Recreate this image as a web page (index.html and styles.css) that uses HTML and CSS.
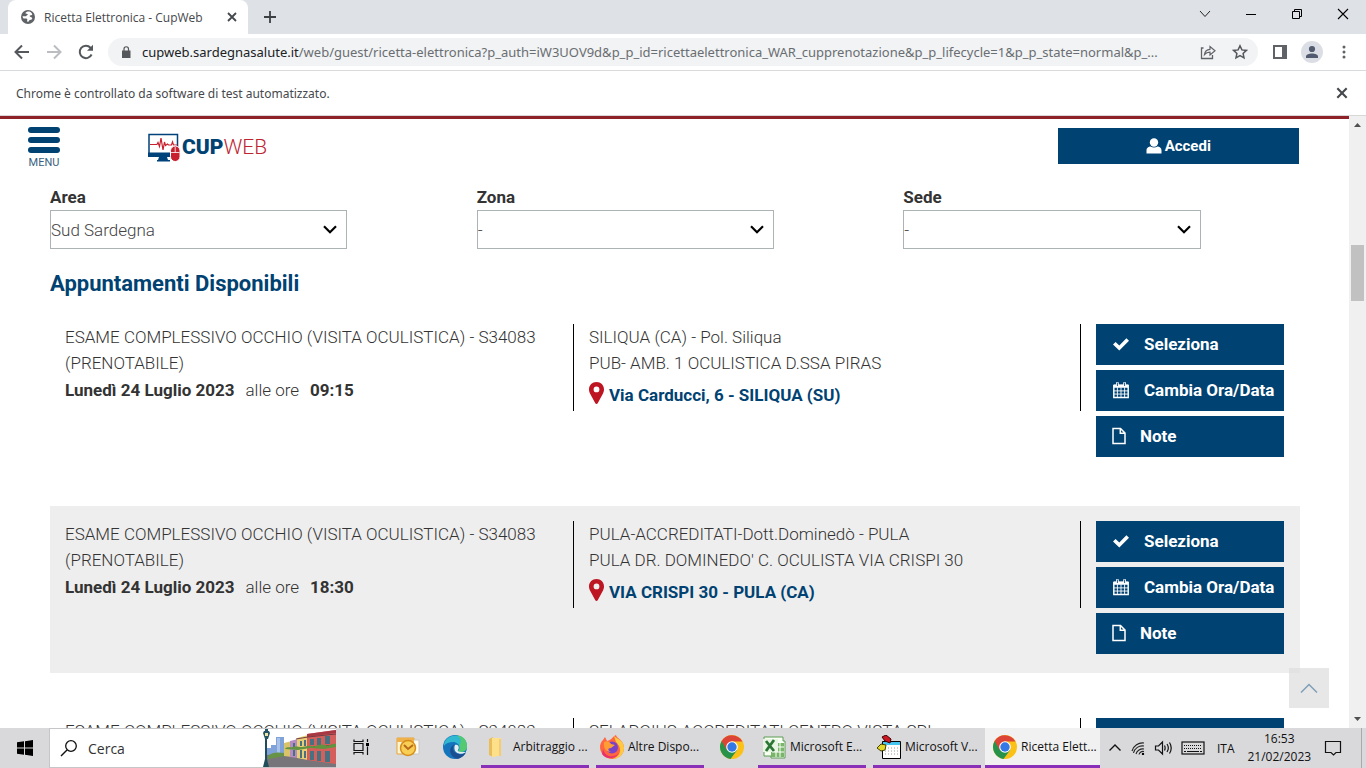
FILE: index.html
```html
<!DOCTYPE html>
<html lang="it">
<head>
<meta charset="utf-8">
<title>Ricetta Elettronica - CupWeb</title>
<link rel="stylesheet" href="styles.css">
</head>
<body>
<svg class="defs" aria-hidden="true">
  <symbol id="close" viewBox="0 0 12 12"><path d="M2 2l8 8M10 2l-8 8" stroke="currentColor" stroke-width="1.8" fill="none"/></symbol>
  <symbol id="check" viewBox="0 0 18 18"><path d="M1 9.600 3.600 7l3.700 3.600L14.400 3.200 17 5.800 7.300 15.500z" fill="#fff"/></symbol>
  <symbol id="calendar" viewBox="0 0 18 20"><path d="M1 5h16v13.300H1z" fill="none" stroke="#fff" stroke-width="1.600"/><path d="M1 4h16v3.500H1zM3.500 1.500h3v4h-3zM11.500 1.500h3v4h-3z" fill="#fff"/><path d="M1 11h16M1 14.500h16M5 7v11M9 7v11M13 7v11" stroke="#fff"/><path d="M5 2v3.500M13 2v3.500" stroke="#004272"/></symbol>
  <symbol id="file" viewBox="0 0 14 18"><path d="M1 1.500h7.500L13 6v10.500H1zM8.300 1.500V6.200H13" fill="none" stroke="#fff" stroke-width="1.500"/></symbol>
  <symbol id="pin" viewBox="0 0 15 22"><path fill-rule="evenodd" d="M7.500 0C3.200 0 0 3.200 0 7.400c0 1.600.4 2.600 1 4L6.300 21.200c.5 1 1.900 1 2.400 0L14 11.400c.6-1.400 1-2.400 1-4C15 3.200 11.800 0 7.500 0zm0 4.500a2.900 2.900 0 1 1 0 5.800 2.900 2.900 0 0 1 0-5.800z" fill="#bd1522"/></symbol>
  <symbol id="down" viewBox="0 0 14 9"><path d="M1 1.300l6 5.900 6-5.900" fill="none" stroke="#000" stroke-width="2.200"/></symbol>
  <symbol id="chrome" viewBox="0 0 24 24"><circle cx="12" cy="12" r="12" fill="#fbc116"/><path d="M12 12 1.600 6A12 12 0 0 0 10.500 23.900L17.200 15z" fill="#27934a"/><path d="M1.600 6A12 12 0 0 1 22.400 6.500H12L6.800 15z" fill="#dc4437"/><circle cx="12" cy="12" r="5.800" fill="#fff"/><circle cx="12" cy="12" r="4.700" fill="#3478e5"/></symbol>
</svg>

<div class="tabstrip">
  <div class="tab">
    <svg class="i14" viewBox="0 0 14 14"><circle cx="7" cy="7" r="7" fill="#5f6368"/><path d="M8.500 1.600C6.500 1.300 5 2 4.300 3.300c.8.700 2 .3 2.500 1 .2 1-1.300.9-1.600 1.900-1 .5-2.500-.3-3.700.1.100 1 .5 1.600 1 2.200 1.300.2 2.700-.4 3.600.4.600.8-.3 1.600.2 2.900 1.200.3 1.700-.7 2-1.500.8-.7 2.300-.4 2.900-1.600.3-1.200-1-1.800-2-2-1.100-.4-.3-1.300.6-1.400.9.200 1.300-.3 1.500-.8C10.600 3 9.700 2 8.500 1.600z" fill="#fff"/></svg>
    <span class="tab-title">Ricetta Elettronica - CupWeb</span>
    <button class="icon-btn" aria-label="Chiudi scheda"><svg class="i12"><use href="#close"/></svg></button>
  </div>
  <button class="icon-btn new-tab" aria-label="Nuova scheda"><svg class="i12" viewBox="0 0 12 12"><path d="M6 0v12M0 6h12" stroke="#3c4043" stroke-width="1.800"/></svg></button>
  <div class="window-controls">
    <button class="icon-btn" aria-label="Cerca schede"><svg class="i12" viewBox="0 0 12 12"><path d="M1 3l5 5.500L11 3" fill="none" stroke="#222"/></svg></button>
    <button class="icon-btn" aria-label="Riduci a icona"><svg class="i12" viewBox="0 0 12 12"><path d="M1 6.500h10" stroke="#000"/></svg></button>
    <button class="icon-btn" aria-label="Ripristina"><svg class="i12" viewBox="0 0 12 12"><path d="M1.500 3.500h7v7h-7zM3.500 3.500v-2h7v7h-2" fill="none" stroke="#000"/></svg></button>
    <button class="icon-btn" aria-label="Chiudi"><svg class="i12" viewBox="0 0 12 12"><path d="M1 1l10 10M11 1L1 11" stroke="#000" stroke-width="1.100"/></svg></button>
  </div>
</div>

<div class="toolbar">
  <button class="icon-btn" aria-label="Indietro"><svg class="i16" viewBox="0 0 16 16"><path d="M15 8H2M8 1.500L1.500 8 8 14.500" fill="none" stroke="#54575b" stroke-width="2"/></svg></button>
  <button class="icon-btn" aria-label="Avanti"><svg class="i16" viewBox="0 0 16 16"><path d="M1 8h13M8 1.500L14.500 8 8 14.500" fill="none" stroke="#bbbdc0" stroke-width="2"/></svg></button>
  <button class="icon-btn" aria-label="Ricarica"><svg class="i16" viewBox="0 0 16 16"><path d="M13.600 10.500A6.200 6.200 0 1 1 12.500 3.700L14 5.300" fill="none" stroke="#54575b" stroke-width="2"/><path d="M15 .8v6H9z" fill="#54575b"/></svg></button>
  <div class="address">
    <svg class="i12" viewBox="0 0 12 12"><path d="M4 5V3a2.200 2.200 0 0 1 4.500 0v2" fill="none" stroke="#54575b" stroke-width="1.200"/><path d="M2 4.500h8.500V12H2z" fill="#54575b"/></svg>
    <div class="url" role="textbox" aria-label="Indirizzo" contenteditable="true" spellcheck="false"><b>cupweb.sardegnasalute.it</b>/web/guest/ricetta-elettronica?p_auth=iW3UOV9d&amp;p_p_id=ricettaelettronica_WAR_cupprenotazione&amp;p_p_lifecycle=1&amp;p_p_state=normal&amp;p_...</div>
    <button class="icon-btn" aria-label="Condividi"><svg class="i16" viewBox="0 0 16 16"><path d="M3.500 4H1.500v10.500h11V11" fill="none" stroke="#5f6368" stroke-width="1.300"/><path d="M4.500 10.500C5 7 7 5.500 10 5.300V2.500l5 4.300-5 4.200V8.200c-2.500 0-4 .6-5.500 2.300z" fill="none" stroke="#5f6368" stroke-width="1.200"/></svg></button>
    <button class="icon-btn" aria-label="Preferiti"><svg class="i16" viewBox="0 0 16 16"><path d="M8 1.800l1.900 4.100 4.500.5-3.300 3 .9 4.400L8 11.600l-4 2.200.9-4.400-3.300-3 4.500-.5z" fill="none" stroke="#54575b" stroke-width="1.500"/></svg></button>
  </div>
  <div class="toolbar-end">
    <button class="icon-btn" aria-label="Pannello laterale"><svg class="i16" viewBox="0 0 16 16"><path d="M2 2h12v12H2z" fill="none" stroke="#5f6368" stroke-width="2"/><path d="M10 2h4v12h-4z" fill="#5f6368"/></svg></button>
    <button class="icon-btn" aria-label="Profilo"><svg class="i22" viewBox="0 0 22 22"><circle cx="11" cy="11" r="11" fill="#dbdfe5"/><circle cx="11" cy="8" r="3.100" fill="#515c70"/><path d="M5 17v-1.500c0-4 12-4 12 0V17z" fill="#515c70"/></svg></button>
    <button class="icon-btn" aria-label="Menu"><svg class="i16" viewBox="0 0 16 16"><path d="M8 1.500a1.500 1.500 0 1 1 0 3 1.500 1.500 0 0 1 0-3zm0 5a1.500 1.500 0 1 1 0 3 1.500 1.500 0 0 1 0-3zm0 5a1.500 1.500 0 1 1 0 3 1.500 1.500 0 0 1 0-3z" fill="#5f6368"/></svg></button>
  </div>
</div>

<div class="infobar">
  <span>Chrome è controllato da software di test automatizzato.</span>
  <button class="icon-btn" aria-label="Chiudi avviso"><svg class="i14"><use href="#close"/></svg></button>
</div>

<div class="viewport">
  <div class="page">
    <header class="site-header">
      <button class="menu-btn"><i></i><i></i><i></i><span>MENU</span></button>
      <a class="logo" href="#" aria-label="CUPWEB">
        <svg class="logo-mark" viewBox="0 0 32 29"><path d="M1 1.500h28.500V23H1z" fill="#fff" stroke="#00427a" stroke-width="1.500"/><path d="M0 19.500h30V24H0zM11 24h8l1 3h2v1.500H9V27h1z" fill="#00427a"/><path d="M2 11.500h7l1-2 1.500 4 1.500-8.500 2 12 1.500-8 1 3.500 2-1.500 1 1h3l1-3 1 3h4" fill="none" stroke="#c8202e" stroke-width="1.200"/><rect x="22.500" y="13" width="9.500" height="15.500" rx="4.700" fill="#c8202e" stroke="#fff"/><path d="M27.200 14v5.500M23 19.500h8.500" stroke="#fff" stroke-width=".8"/></svg>
        <span class="logo-cup">CUP</span><span class="logo-web">WEB</span>
      </a>
      <button class="login"><svg class="i16" viewBox="0 0 16 16"><circle cx="8" cy="4.500" r="4.200" fill="#fff"/><path d="M.5 15.500v-3C.5 9.500 3 8.500 4.500 8.500c2 1.200 5 1.200 7 0 1.500 0 4 1 4 4v3z" fill="#fff"/></svg>Accedi</button>
    </header>

    <main class="content">
      <form class="filters">
        <div class="field"><label for="area">Area</label><div class="select"><select id="area"><option>Sud Sardegna</option></select><svg><use href="#down"/></svg></div></div>
        <div class="field"><label for="zona">Zona</label><div class="select"><select id="zona"><option>-</option></select><svg><use href="#down"/></svg></div></div>
        <div class="field"><label for="sede">Sede</label><div class="select"><select id="sede"><option>-</option></select><svg><use href="#down"/></svg></div></div>
      </form>

      <h2>Appuntamenti Disponibili</h2>

      <div class="slots">
        <article class="slot">
          <div class="exam"><p>ESAME COMPLESSIVO OCCHIO (VISITA OCULISTICA) - S34083 (PRENOTABILE)</p><p class="when"><strong>Lunedì 24 Luglio 2023</strong><span>alle ore</span><strong>09:15</strong></p></div>
          <div class="place"><p>SILIQUA (CA) - Pol. Siliqua</p><p>PUB- AMB. 1 OCULISTICA D.SSA PIRAS</p><a href="#"><svg><use href="#pin"/></svg>Via Carducci, 6 - SILIQUA (SU)</a></div>
          <div class="actions"><button><svg class="i18"><use href="#check"/></svg>Seleziona</button><button><svg class="i18"><use href="#calendar"/></svg>Cambia Ora/Data</button><button><svg class="i14 tall"><use href="#file"/></svg>Note</button></div>
        </article>
        <article class="slot alt">
          <div class="exam"><p>ESAME COMPLESSIVO OCCHIO (VISITA OCULISTICA) - S34083 (PRENOTABILE)</p><p class="when"><strong>Lunedì 24 Luglio 2023</strong><span>alle ore</span><strong>18:30</strong></p></div>
          <div class="place"><p>PULA-ACCREDITATI-Dott.Dominedò - PULA</p><p>PULA DR. DOMINEDO' C. OCULISTA VIA CRISPI 30</p><a href="#"><svg><use href="#pin"/></svg>VIA CRISPI 30 - PULA (CA)</a></div>
          <div class="actions"><button><svg class="i18"><use href="#check"/></svg>Seleziona</button><button><svg class="i18"><use href="#calendar"/></svg>Cambia Ora/Data</button><button><svg class="i14 tall"><use href="#file"/></svg>Note</button></div>
        </article>
        <article class="slot">
          <div class="exam"><p>ESAME COMPLESSIVO OCCHIO (VISITA OCULISTICA) - S34083</p></div>
          <div class="place"><p>SELARGIUS-ACCREDITATI CENTRO VISTA SRL</p></div>
          <div class="actions"><button aria-label="Seleziona"></button></div>
        </article>
      </div>
    </main>
  </div>
  <div class="scrollbar" aria-hidden="true">
    <svg viewBox="0 0 17 17"><path d="M5 11l3.500-4L12 11z" fill="#505050"/></svg>
    <div class="track"><div class="thumb"></div></div>
    <svg viewBox="0 0 17 17"><path d="M5 6l3.500 4L12 6z" fill="#505050"/></svg>
  </div>
  <button class="to-top" aria-label="Torna su"><svg viewBox="0 0 18 10"><path d="M1 9.500l8-8 8 8" fill="none" stroke="#7f9fb8" stroke-width="1.500"/></svg></button>
</div>

<footer class="taskbar">
  <button class="start" aria-label="Start"><svg class="i16" viewBox="0 0 16 16"><path d="M0 2.300l7-1v6.200H0zM8 1.200L16 0v7.500H8zM0 8.500h7v6.200l-7-1zM8 8.500h8V16l-8-1.200z"/></svg></button>
  <div class="search">
    <svg class="i18" viewBox="0 0 18 18"><circle cx="11" cy="7" r="5.300" fill="none" stroke="#111" stroke-width="1.300"/><path d="M7 11l-6 6" stroke="#111" stroke-width="1.400"/></svg>
    <input type="text" placeholder="Cerca" aria-label="Cerca">
    <svg class="street" viewBox="0 0 74 38">
      <path d="M9 16h7v14H9zM14 8h8v22h-8zM4 19h5v9H4z" fill="#7fa3d8"/><path d="M15 9h3v18h-3z" fill="#a8c2e8"/>
      <path d="M4 26l18-1 52 9v4H6z" fill="#77747a"/><path d="M6 27c4-4 9-4 17-3v3L6 30z" fill="#679347"/>
      <path d="M22 14l8-2v16l-8-1z" fill="#d9c36a"/><path d="M28 12l8-2v19l-8-1z" fill="#b68bc4"/><path d="M35 9l11-3v25l-11-2z" fill="#e9cf74"/><path d="M45 5l29-4v34l-29-4z" fill="#d5605b"/><path d="M45 5l29-4v3L45 8z" fill="#a83944"/>
      <path d="M48 10h4v6h-4zM55 9h4v7h-4zM63 7h5v8h-5zM38 12h2v5h-2zM42 11h2v6h-2zM31 14h2v5h-2zM48 22h4v9h-4zM55 22h4v10h-4zM63 22h5v11h-5zM38 21h2v8h-2zM42 22h2v7h-2zM31 21h2v6h-2z" fill="#477180"/>
      <path d="M34 19l13-1 27-2M34 10l12-2 28-3" stroke="#743b45" fill="none"/><path d="M23 20c2-3 5-1 8-2s5 0 9 0 6-2 10-1 9-3 13-1 8-2 11-1v3l-12 2-14-1-12 2-13-1z" fill="#62933f"/>
      <path d="M3 8h2v22l2 8H1l2-8z" fill="#214d5b"/><path d="M1 4l1-2h5l1 2-2 6H3zM3 0h3v2H3z" fill="#245364"/><path d="M3 4h3v3H3z" fill="#eee2a5"/>
    </svg>
  </div>
  <nav class="apps">
    <button class="app pinned" aria-label="Visualizzazione attività"><svg class="i18" viewBox="0 0 18 18"><path d="M2 1.500v2h9v-2M2 16.500v-2h9v2M2 5.500h9v7H2zM15.500 1v3M15.500 8.500V17" fill="none" stroke="#111" stroke-width="1.200"/><path d="M14 5h3v3h-3z"/></svg></button>
    <button class="app pinned" aria-label="Outlook"><svg viewBox="0 0 24 24"><path d="M1 3h17v16H1z" fill="#fff4d0" stroke="#e6a33b"/><path d="M6 5h17v14H6z" fill="#fffbef" stroke="#c8c8c8"/><path d="M1 3h17v4H1z" fill="#efb24b"/><circle cx="12" cy="13" r="7.500" fill="#f8ce55" stroke="#d68d1c" stroke-width="1.500"/><path d="M8 10l4 4 5-4" fill="none" stroke="#b66a1a" stroke-width="2"/></svg></button>
    <button class="app pinned" aria-label="Edge"><svg viewBox="0 0 24 24"><circle cx="12" cy="12" r="12" fill="#1475bc"/><path d="M1 9C4-3 24-2 24 11c0 6-6 7-9 5 4-4 0-9-5-9-4 0-7 1-9 4z" fill="#2fb8cf"/><path d="M14 .2C21 1 24 6 24 11c0 6-6 7-9 5 2-1 2-4 1-6 3-3 2-7-2-9.800z" fill="#53ca72"/><path d="M12 9c-3 2-3 8 3 10 3 1 6 0 8-2-2 5-7 7-9 6.700C7 22 4 13 12 9z" fill="#1b4d91"/><path d="M12 10c3-1 5 2 3 5-1 1 1 2 3 2h6c1-2 0-1-1 0-5 4-14 1-11-7z" fill="#e5edf1"/></svg></button>
    <button class="app"><svg viewBox="0 0 24 24"><path d="M4 4l4-2v20l-4-2z" fill="#e9bd59"/><path d="M7 3h9v17l-7 2H7z" fill="#ffe08a"/><path d="M14 4h2v17h-2z" fill="#f3cd70"/></svg><span>Arbitraggio ...</span></button>
    <button class="app"><svg viewBox="0 0 24 24"><path d="M3 5l2-3 2 4c5-1 6-5 9-6 0 3 8 5 8 13 0 7-6 11-12 11S0 19 0 12c0-3 1-5 3-7z" fill="#ff6640"/><path d="M14 1c3 3 10 4 10 12 0 7-6 11-11 11 10-5 8-12 3-17z" fill="#ffc940"/><path d="M3 14C6 24 16 22 19 18c-2 5-12 8-17 1z" fill="#e8326d"/><circle cx="12" cy="12.500" r="6" fill="#7942c9"/><path d="M4 7c4-2 6 0 7 2l4 1-4 3c-4 0-3 3 0 4-5 0-8-4-7-10z" fill="#ff9c35"/></svg><span>Altre Dispo...</span></button>
    <button class="app pinned" aria-label="Chrome"><svg><use href="#chrome"/></svg></button>
    <button class="app"><svg viewBox="0 0 24 24"><path d="M2 2h19v4h2v17H9v-2H2z" fill="#f6fff2" stroke="#5c9c54"/><path d="M9 8h13v14H9z" fill="#78b568"/><path d="M10 12h12M10 17h12M14 8v14M18 8v14" stroke="#fff"/><path d="M1 4h15v13H1z" fill="#e8f5e3"/><path d="M4 6l8 10M12 5L4 16" stroke="#2b7634" stroke-width="2.800"/></svg><span>Microsoft E...</span></button>
    <button class="app"><svg viewBox="0 0 24 24"><path d="M5.500 6.500h18v17h-18z" fill="#fff" stroke="#000"/><path d="M6 7h17v3H6z" fill="#45c5ef"/><path d="M8 13h14M8 16h14M8 19h14" stroke="#999" stroke-dasharray="1 2"/><path d="M5 2l4-2 5 4-1 4-5-2z" fill="#cb1724" stroke="#3c0000"/><path d="M0 13l4-4 5 1-1 5-4 1z" fill="#e2d92a" stroke="#444000"/></svg><span>Microsoft V...</span></button>
    <button class="app active"><svg><use href="#chrome"/></svg><span>Ricetta Elett...</span></button>
  </nav>
  <div class="tray">
    <svg class="i14" viewBox="0 0 14 14"><path d="M1.500 9.500L7 4l5.500 5.500" fill="none" stroke="#111" stroke-width="1.400"/></svg>
    <svg class="i14" viewBox="0 0 14 14"><path d="M1 10A11 11 0 0 1 13 2M2.500 12A9 9 0 0 1 13 5M5 13a7 7 0 0 1 8-5M8 13.500a4 4 0 0 1 5-3" fill="none" stroke="#222" stroke-width="1.100"/><circle cx="12" cy="13" r="1.200"/></svg>
    <svg class="i18" viewBox="0 0 18 18"><path d="M1.500 7h3l4-4v12l-4-4h-3zM10.500 6.500c1 2 1 3 0 5M13 5c2 3 2 5 0 8M15.500 3.500c2.500 4 2.500 7 0 11" fill="none" stroke="#111" stroke-width="1.200"/></svg>
    <svg class="keyboard" viewBox="0 0 24 14"><rect x="1" y="1" width="22" height="12" fill="none" stroke="#111" stroke-width="1.200"/><path d="M3 4.500h18M3 7.500h18" stroke="#111" stroke-dasharray="1 1"/><path d="M3 10.500h2m1 0h12m1 0h2" stroke="#111"/></svg>
    <span class="lang">ITA</span>
    <time>16:53<br>21/02/2023</time>
    <svg class="i18" viewBox="0 0 18 18"><path d="M1.500 2.500h15v11H12L9.500 16 7 13.500H1.500z" fill="none" stroke="#111" stroke-width="1.200"/></svg>
  </div>
  <button class="show-desktop" aria-label="Mostra desktop"></button>
</footer>
</body>
</html>
```
FILE: styles.css
```css
* { box-sizing: border-box; }

body {
  margin: 0;
  height: 100vh;
  display: flex;
  flex-direction: column;
  overflow: hidden;
  background: #fff;
  color: #333;
  font-family: "Open Sans", "Noto Sans", sans-serif;
  font-size: 12px;
}

button, input, select { font: inherit; color: inherit; }
button { border: 0; padding: 0; background: none; }
p, h2 { margin: 0; }
svg { display: block; flex: none; }
.defs { display: none; }

.i12 { width: 12px; height: 12px; }
.i14 { width: 14px; height: 14px; }
.i16 { width: 16px; height: 16px; }
.i18 { width: 18px; height: 18px; }
.i22 { width: 22px; height: 22px; }
.i14.tall { height: 18px; }

.icon-btn { display: flex; align-items: center; justify-content: center; flex: none; }

/* Browser window */
.tabstrip {
  height: 34px;
  flex: none;
  display: flex;
  align-items: center;
  padding-left: 8px;
  background: #dee1e6;
}
.tab {
  width: 240px;
  height: 34px;
  display: flex;
  align-items: center;
  gap: 9px;
  padding: 0 10px 0 13px;
  border-radius: 8px 8px 0 0;
  background: #fff;
  color: #45484c;
  font-size: 12px;
}
.tab-title { flex: 1; white-space: nowrap; }
.new-tab { margin-left: 16px; }
.window-controls { display: flex; margin-left: auto; padding-bottom: 6px; }
.window-controls .icon-btn { width: 46px; height: 28px; }

.toolbar {
  height: 37px;
  flex: none;
  display: flex;
  align-items: center;
  gap: 16px;
  padding: 0 14px;
  border-bottom: 1px solid #d8dadc;
}
.address {
  flex: 1;
  min-width: 0;
  height: 28px;
  display: flex;
  align-items: center;
  gap: 10px;
  margin: 0 -2px;
  padding: 0 7px 0 12px;
  border-radius: 14px;
  background: #f1f3f4;
}
.url {
  flex: 1;
  min-width: 0;
  overflow: hidden;
  white-space: nowrap;
  color: #6a6e72;
  font-family: "Noto Sans", sans-serif;
  font-size: 13px;
}
.url b { font-weight: 400; color: #202124; }
.address .icon-btn { width: 22px; }
.toolbar-end { display: flex; align-items: center; gap: 13px; }

.infobar {
  height: 45px;
  flex: none;
  display: flex;
  align-items: center;
  justify-content: space-between;
  padding: 0 17px 0 16px;
  border-bottom: 1px solid #d8d8d8;
  color: #45484c;
  font-family: "Noto Sans", sans-serif;
}

/* Web page */
.viewport { flex: 1; min-height: 0; display: flex; position: relative; }
.page {
  flex: 1;
  min-width: 0;
  overflow: hidden;
  border-top: 3px solid #8f2129;
  font-family: Roboto, "Noto Sans", sans-serif;
  font-size: 17px;
}
.site-header {
  height: 54px;
  display: flex;
  align-items: center;
  padding: 0 50px 0 28px;
}
.menu-btn {
  width: 32px;
  display: flex;
  flex-direction: column;
  align-self: flex-start;
  gap: 4px;
  margin-top: 8px;
  color: #3b5f80;
  font-size: 11px;
}
.menu-btn i { height: 6px; border-radius: 3px; background: #004272; }
.menu-btn span { line-height: 12px; }
.logo { display: flex; align-items: center; margin-left: 88px; padding-top: 2px; font-size: 21px; text-decoration: none; }
.logo-mark { width: 32px; height: 29px; margin-right: 2px; }
.logo-cup { color: #004272; font-weight: 900; }
.logo-web { color: #bd2532; font-weight: 300; }
.login {
  width: 19%;
  height: 36px;
  margin-left: auto;
  display: flex;
  align-items: center;
  justify-content: center;
  gap: 3px;
  background: #004272;
  color: #fff;
  font-size: 15px;
  font-weight: 700;
}

.content { padding: 12px 49px 0 50px; }
.filters { display: grid; grid-template-columns: repeat(3, 1fr); gap: 30px; }
.field label { display: block; line-height: 25px; font-weight: 700; }
.select { position: relative; width: 75%; height: 39px; }
.select select {
  width: 100%;
  height: 100%;
  padding: 0;
  appearance: none;
  border: 1px solid #acb3b5;
  border-radius: 0;
  background: #fff;
  color: #444;
  font-size: 17px;
  font-weight: 300;
}
.select svg { position: absolute; right: 10px; top: 15px; width: 14px; height: 9px; pointer-events: none; }

h2 { padding: 21px 0 11px; color: #004272; font-size: 22px; line-height: 28px; }

.slots { display: flex; flex-direction: column; gap: 30px; }
.slot {
  display: grid;
  grid-template-columns: 1fr 1fr 204px;
  align-items: start;
  padding: 15px 15px 19px;
  line-height: 26px;
  font-weight: 300;
}
.slot.alt { background: #eee; }
.exam { padding-right: 30px; }
.when { display: flex; gap: 11px; line-height: 28px; }
.when strong { font-weight: 700; }
.place { min-height: 87px; padding: 0 15px; border: solid #000; border-width: 0 1px; }
.place a {
  display: flex;
  align-items: center;
  gap: 5px;
  padding-top: 4px;
  line-height: 31px;
  color: #004272;
  font-weight: 700;
  text-decoration: none;
}
.place svg { width: 15px; height: 22px; margin-bottom: 6px; }
.actions { display: flex; flex-direction: column; gap: 5px; padding: 0 1px 0 15px; }
.actions button {
  height: 41px;
  display: flex;
  align-items: center;
  gap: 14px;
  padding: 0 0 2px 16px;
  background: #004272;
  color: #fff;
  font-weight: 700;
  white-space: nowrap;
}

.scrollbar { width: 17px; display: flex; flex-direction: column; background: #f0f0f0; }
.scrollbar svg { width: 17px; height: 17px; }
.track { flex: 1; padding: 112px 2px 0; }
.thumb { height: 56px; background: #c1c1c1; }
.to-top {
  position: absolute;
  right: 37px;
  bottom: 20px;
  width: 40px;
  height: 40px;
  display: flex;
  align-items: center;
  justify-content: center;
  background: rgba(221, 221, 221, .7);
}
.to-top svg { width: 18px; height: 10px; }

/* Desktop taskbar */
.taskbar { height: 40px; flex: none; display: flex; background: #d9d9db; color: #111; }
.start { width: 49px; display: flex; align-items: center; justify-content: center; }
.search {
  width: 287px;
  display: flex;
  align-items: center;
  padding-left: 10px;
  border: 1px solid #c6c6c8;
  border-right: 0;
  background: #fff;
}
.search input { flex: 1; min-width: 0; margin-left: 10px; padding: 0; border: 0; outline: 0; font-size: 14px; }
.search input::placeholder { color: #333; opacity: 1; }
.street { width: 74px; height: 38px; }
.apps { display: flex; margin-left: 1px; }
.app {
  width: 108px;
  margin: 0 4px 0 3px;
  display: flex;
  align-items: center;
  gap: 4px;
  padding: 0 4px;
  border-bottom: 3px solid #8a30b8;
  white-space: nowrap;
}
.app svg { width: 24px; height: 24px; }
.app svg.i18 { width: 18px; height: 18px; }
.app.pinned { width: 47px; margin: 0; justify-content: center; border-color: transparent; }
.app.active { width: 115px; margin: 0; padding: 0 8px; background: #f1f1f2; }
.tray { flex: 1; display: flex; align-items: center; gap: 9px; padding: 0 19px 0 8px; }
.keyboard { width: 24px; height: 14px; }
.lang { margin-left: 3px; }
.tray time { margin: 0 auto; line-height: 18px; text-align: center; }
.show-desktop { width: 5px; border-left: 1px solid #a9a9ab; }
```
